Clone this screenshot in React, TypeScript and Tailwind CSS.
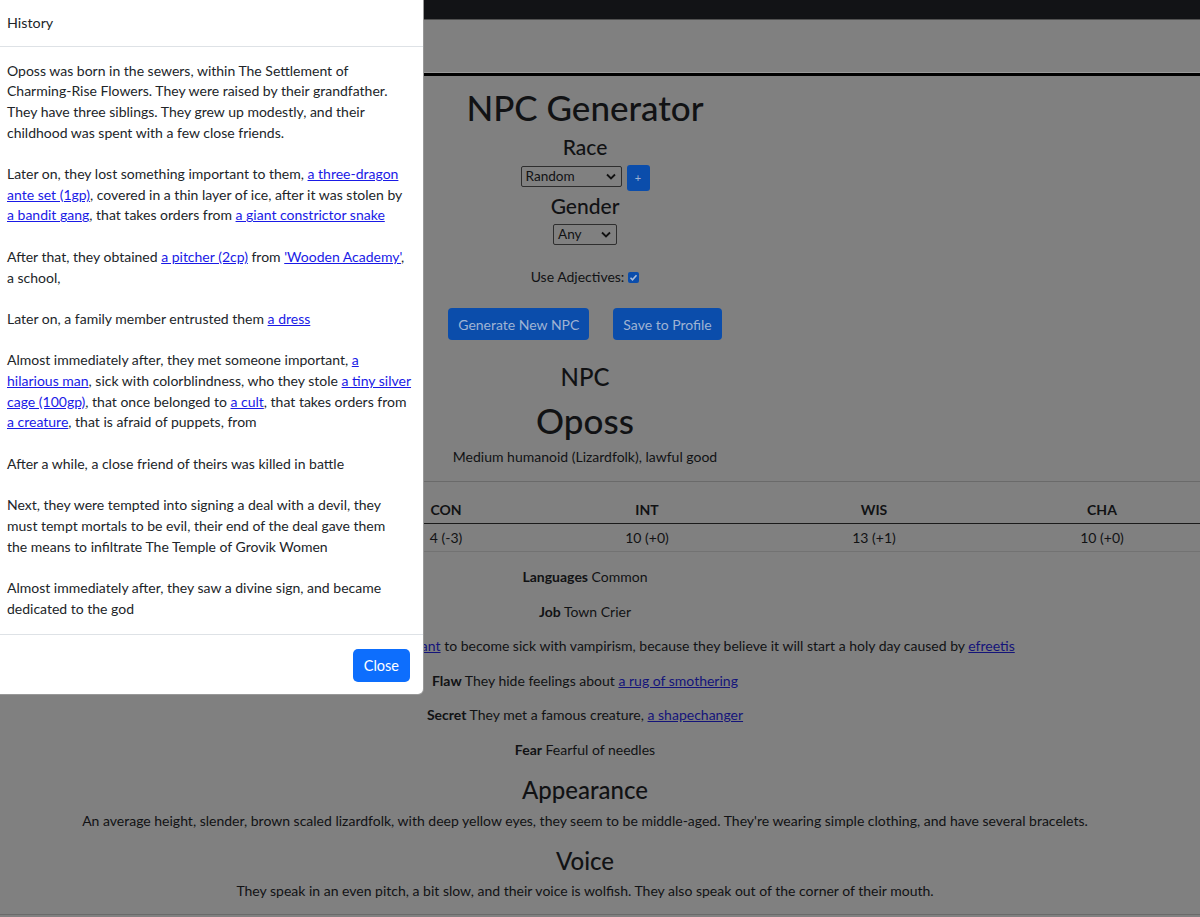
import React from 'react';

const link = 'text-[#1a1ae6] underline';
const bgLink = 'text-[#14147a] underline';

const History: React.FC = () => (
  <div className="absolute left-0 top-0 w-[424px] bg-white border-r border-b border-black/40 rounded-br-[6px] text-[#212529] text-[14px] leading-[20.7px]">
    <div className="h-[47px] flex items-center pl-[7px] border-b border-[#dee2e6] text-[14.3px]">History</div>
    <div className="pt-[13.5px] pb-[15px] pl-[7px] pr-[4px] space-y-[20.7px] whitespace-nowrap">
      <p>
        Oposs was born in the sewers, within The Settlement of
        <br />
        Charming-Rise Flowers. They were raised by their grandfather.
        <br />
        They have three siblings. They grew up modestly, and their
        <br />
        childhood was spent with a few close friends.
      </p>
      <p>
        Later on, they lost something important to them,{' '}
        <a className={link}>
          a three-dragon
          <br />
          ante set (1gp)
        </a>
        , covered in a thin layer of ice, after it was stolen by
        <br />
        <a className={link}>a bandit gang</a>, that takes orders from <a className={link}>a giant constrictor snake</a>
      </p>
      <p>
        After that, they obtained <a className={link}>a pitcher (2cp)</a> from{' '}
        <a className={link}>'Wooden Academy'</a>,
        <br />a school,
      </p>
      <p>
        Later on, a family member entrusted them <a className={link}>a dress</a>
      </p>
      <p>
        Almost immediately after, they met someone important,{' '}
        <a className={link}>
          a
          <br />
          hilarious man
        </a>
        , sick with colorblindness, who they stole{' '}
        <a className={link}>
          a tiny silver
          <br />
          cage (100gp)
        </a>
        , that once belonged to <a className={link}>a cult</a>, that takes orders from
        <br />
        <a className={link}>a creature</a>, that is afraid of puppets, from
      </p>
      <p>After a while, a close friend of theirs was killed in battle</p>
      <p>
        Next, they were tempted into signing a deal with a devil, they
        <br />
        must tempt mortals to be evil, their end of the deal gave them
        <br />
        the means to infiltrate The Temple of Grovik Women
      </p>
      <p>
        Almost immediately after, they saw a divine sign, and became
        <br />
        dedicated to the god
      </p>
    </div>
    <div className="flex justify-end border-t border-[#dee2e6] pt-[14px] pb-[12px] pr-[13px]">
      <button className="h-[33px] px-[11px] rounded-[5px] bg-[#0d6efd] text-white text-[14.5px]">Close</button>
    </div>
  </div>
);

const Select: React.FC<{ label: string; width: string }> = ({ label, width }) => (
  <div className={`${width} h-[21px] flex items-center justify-between border border-[#2e2e2e] rounded-[2px] pl-[4px] pr-[5px] text-[13.6px]`}>
    <span>{label}</span>
    <svg width="10" height="7" viewBox="0 0 10 7" fill="none" stroke="#111" strokeWidth="1.8">
      <path d="M1 1.5l4 4 4-4" />
    </svg>
  </div>
);

const Row: React.FC<{ k: string; children: React.ReactNode }> = ({ k, children }) => (
  <p className="mt-[14.5px] leading-[20px]">
    <b className="font-bold">{k}</b> {children}
  </p>
);

const stats = [
  ['STR', '11 (+0)'],
  ['DEX', '12 (+1)'],
  ['CON', '4 (-3)'],
  ['INT', '10 (+0)'],
  ['WIS', '13 (+1)'],
  ['CHA', '10 (+0)'],
];

export default function App() {
  return (
    <div className="relative w-[1200px] h-[917px] overflow-hidden bg-[#808080] text-[#111214] font-['Lato',sans-serif] text-[14px]">
      <div className="h-[20px] bg-[#121316] border-b border-[#505050]" />
      <div className="h-[52px]" />
      <div className="h-[1px] bg-[#9a9a9a]" />
      <div className="h-[3px] bg-black" />

      <div className="w-[1170px] flex flex-col items-center text-center">
        <h1 className="mt-[10px] leading-[42px] text-[35px] font-medium">NPC Generator</h1>
        <h4 className="mt-[5px] leading-[28px] text-[21px] font-medium">Race</h4>
        <div className="mt-[4px] h-[26px] flex items-start gap-[5px]">
          <div className="mt-[1px]">
            <Select label="Random" width="w-[101px]" />
          </div>
          <button className="w-[23px] h-[26px] rounded-[3px] bg-[#0b4dab] text-[#9fb3d3] text-[11px]">+</button>
        </div>
        <h4 className="mt-[1px] leading-[28px] text-[21px] font-medium">Gender</h4>
        <div className="mt-[4px]">
          <Select label="Any" width="w-[64px]" />
        </div>
        <div className="mt-[22px] leading-[20px] flex items-center gap-[4px]">
          <span>Use Adjectives:</span>
          <span className="w-[11px] h-[11px] rounded-[2px] bg-[#0b4dab] flex items-center justify-center">
            <svg width="9" height="9" viewBox="0 0 9 9" fill="none" stroke="#a9bcd9" strokeWidth="1.6">
              <path d="M1.5 4.8l2 2 4-4.5" />
            </svg>
          </span>
        </div>
        <div className="mt-[21px] flex gap-[24px]">
          <button className="h-[32px] px-[10px] rounded-[4px] bg-[#0b4dab] text-[#9fb3d3] text-[14px]">
            Generate New NPC
          </button>
          <button className="h-[32px] px-[10px] rounded-[4px] bg-[#0b4dab] text-[#9fb3d3] text-[14px]">
            Save to Profile
          </button>
        </div>
        <h3 className="mt-[22px] leading-[30px] text-[24px] font-medium">NPC</h3>
        <h1 className="mt-[6px] leading-[44px] text-[35px] font-medium">Oposs</h1>
        <p className="mt-[5px] leading-[20px]">Medium humanoid (Lizardfolk), lawful good</p>
      </div>

      <div className="mt-[14px] h-[1px] bg-[#6a6a6a]" />

      <div className="mt-[14px] w-[1216px] grid grid-cols-[179px_179px_176px_226px_228px_228px] text-center">
        {stats.map(([h]) => (
          <div key={h} className="h-[28px] leading-[28px] font-bold border-b border-[#1a1a1a]">
            {h}
          </div>
        ))}
        {stats.map(([h, v]) => (
          <div key={h + 'v'} className="h-[28px] leading-[28px] border-b border-[#727272]">
            {v}
          </div>
        ))}
      </div>

      <div className="w-[1170px] flex flex-col items-center text-center">
        <p className="mt-[15px] leading-[20px]">
          <b className="font-bold">Languages</b> Common
        </p>
        <Row k="Job">Town Crier</Row>
        <Row k="Goal">
          They want <a className={bgLink}>the local tavern's head servant</a> to become sick with vampirism, because
          they believe it will start a holy day caused by <a className={bgLink}>efreetis</a>
        </Row>
        <Row k="Flaw">
          They hide feelings about <a className={bgLink}>a rug of smothering</a>
        </Row>
        <Row k="Secret">
          They met a famous creature, <a className={bgLink}>a shapechanger</a>
        </Row>
        <Row k="Fear">Fearful of needles</Row>
        <h3 className="mt-[15px] leading-[30px] text-[24px] font-medium">Appearance</h3>
        <p className="mt-[6px] leading-[20px]">
          An average height, slender, brown scaled lizardfolk, with deep yellow eyes, they seem to be middle-aged.
          They're wearing simple clothing, and have several bracelets.
        </p>
        <h3 className="mt-[15px] leading-[30px] text-[24px] font-medium">Voice</h3>
        <p className="mt-[5px] leading-[20px]">
          They speak in an even pitch, a bit slow, and their voice is wolfish. They also speak out of the corner of
          their mouth.
        </p>
      </div>
      <div className="mt-[13px] h-[1px] bg-[#6a6a6a]" />

      <History />
    </div>
  );
}
